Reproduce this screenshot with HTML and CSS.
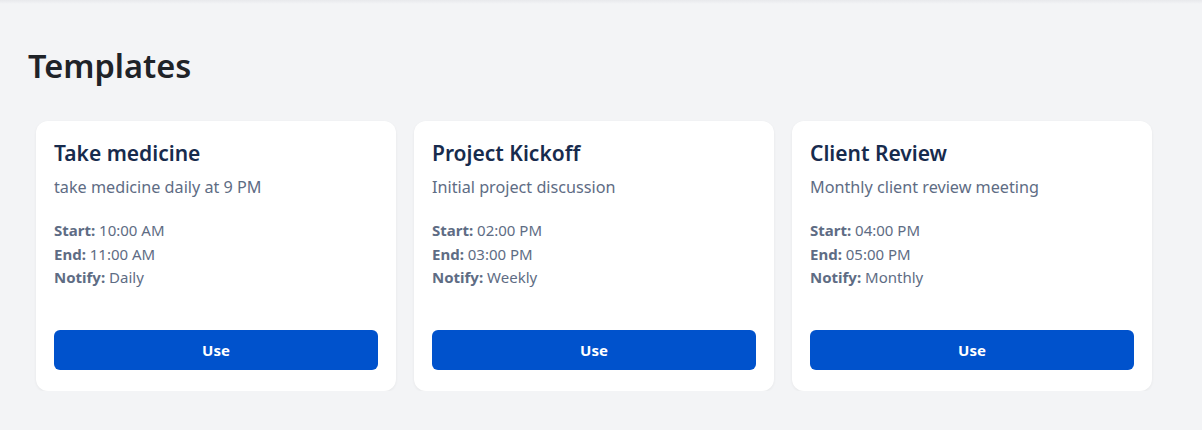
FILE: index.html
```html
<!DOCTYPE html>
<html lang="en">
<head>
<meta charset="utf-8">
<title>Templates</title>
<link rel="stylesheet" href="styles.css">
</head>
<body>
<div class="topline"></div>
<main class="page">
  <h1 class="page-title">Templates</h1>
  <div class="cards">
    <div class="card">
      <h2 class="card-title">Take medicine</h2>
      <p class="card-desc">take medicine daily at 9 PM</p>
      <div class="meta">
        <div><b>Start:</b> 10:00 AM</div>
        <div><b>End:</b> 11:00 AM</div>
        <div><b>Notify:</b> Daily</div>
      </div>
      <button class="use-btn">Use</button>
    </div>
    <div class="card">
      <h2 class="card-title">Project Kickoff</h2>
      <p class="card-desc">Initial project discussion</p>
      <div class="meta">
        <div><b>Start:</b> 02:00 PM</div>
        <div><b>End:</b> 03:00 PM</div>
        <div><b>Notify:</b> Weekly</div>
      </div>
      <button class="use-btn">Use</button>
    </div>
    <div class="card">
      <h2 class="card-title">Client Review</h2>
      <p class="card-desc">Monthly client review meeting</p>
      <div class="meta">
        <div><b>Start:</b> 04:00 PM</div>
        <div><b>End:</b> 05:00 PM</div>
        <div><b>Notify:</b> Monthly</div>
      </div>
      <button class="use-btn">Use</button>
    </div>
  </div>
</main>
</body>
</html>
```

FILE: styles.css
```css
* { box-sizing: border-box; }
html, body {
  margin: 0;
  padding: 0;
  background: #f3f4f6;
  font-family: "Noto Sans", "Open Sans", sans-serif;
}
.topline {
  height: 4px;
  background: linear-gradient(#e8e9ec, #f3f4f6);
}
.page {
  padding: 40px 50px 0 28px;
}
.page-title {
  margin: 0 0 33px 0;
  font-size: 32.5px;
  line-height: 44px;
  font-weight: 600;
  color: #1f2328;
}
.cards {
  display: flex;
  gap: 18px;
  padding-left: 8px;
}
.card {
  width: 360px;
  height: 270px;
  background: #ffffff;
  border-radius: 12px;
  box-shadow: 0 1px 3px rgba(0,0,0,0.06);
  padding: 18px 18px 21px 18px;
  display: flex;
  flex-direction: column;
}
.card-title {
  margin: 0;
  font-size: 21px;
  line-height: 28px;
  font-weight: 600;
  color: #172b4d;
}
.card-desc {
  margin: 8px 0 0 0;
  font-size: 16.2px;
  line-height: 24px;
  color: #5e6c84;
}
.meta {
  margin-top: 20px;
  font-size: 15px;
  line-height: 23.5px;
  color: #5e6c84;
}
.meta b { font-weight: 700; }
.use-btn {
  margin-top: auto;
  height: 40px;
  width: 100%;
  border: none;
  border-radius: 6px;
  background: #0052cc;
  color: #ffffff;
  font-family: inherit;
  font-size: 15px;
  font-weight: 700;
}
```
